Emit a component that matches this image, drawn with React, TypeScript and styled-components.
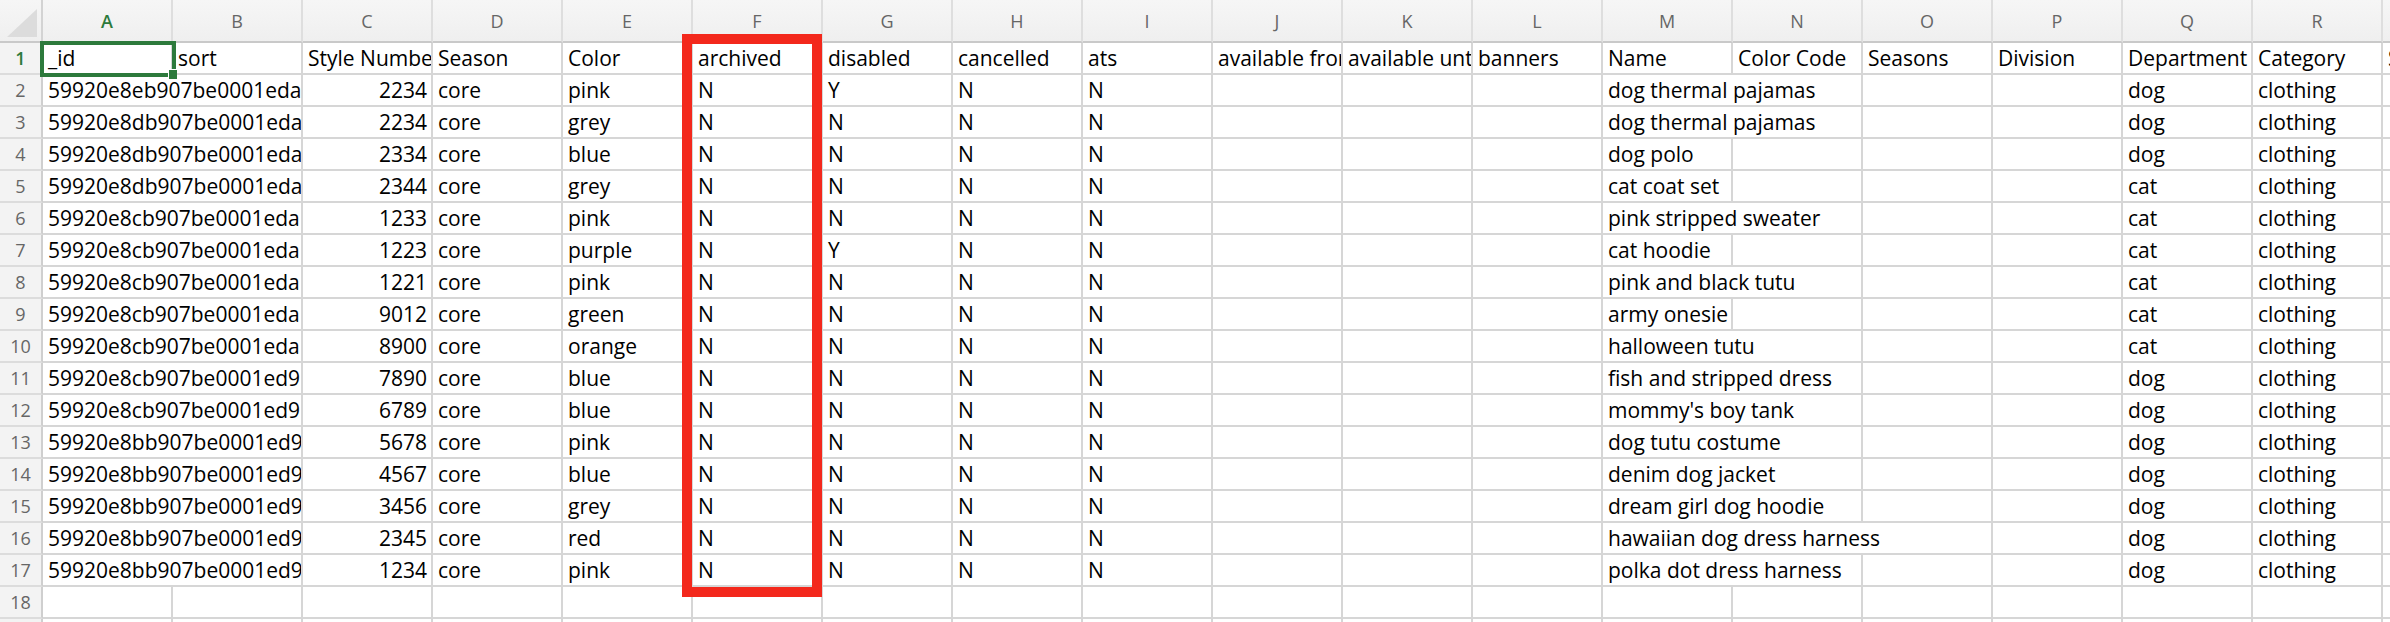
import React from 'react';
import styled, { createGlobalStyle } from 'styled-components';

const COL_W = 130;
const ROW_H = 32;
const HEAD_H = 43;
const ROWHEAD_W = 43;
const FONT = '"Open Sans", "Noto Sans", sans-serif';

const GlobalStyle = createGlobalStyle`
  html, body {
    margin: 0;
    padding: 0;
    background: #ffffff;
    overflow: hidden;
  }
  body {
    font-family: ${FONT};
  }
`;

const Sheet = styled.div`
  position: relative;
  display: grid;
  grid-template-columns: ${ROWHEAD_W}px repeat(19, ${COL_W}px);
  grid-template-rows: ${HEAD_H}px;
  grid-auto-rows: ${ROW_H}px;
  width: max-content;
`;

const Corner = styled.div`
  position: relative;
  background: linear-gradient(#f6f6f6, #efefef);
  border-right: 2px solid #d3d3d3;
  border-bottom: 2px solid #c9c9c9;

  svg {
    position: absolute;
    right: 4px;
    bottom: 4px;
  }
`;

const ColHead = styled.div<{ $active?: boolean }>`
  background: linear-gradient(#f6f6f6, #efefef);
  border-right: 2px solid #dedede;
  border-bottom: 2px solid #c9c9c9;
  display: flex;
  align-items: center;
  justify-content: center;
  font-size: 18px;
  color: ${(p) => (p.$active ? '#2d7a3c' : '#666666')};
  font-weight: ${(p) => (p.$active ? 600 : 400)};
`;

const RowHead = styled.div<{ $active?: boolean }>`
  background: #f3f3f3;
  border-right: 2px solid #cfcfcf;
  border-bottom: 2px solid #dcdcdc;
  display: flex;
  align-items: center;
  justify-content: center;
  font-size: 18px;
  color: ${(p) => (p.$active ? '#2d7a3c' : '#666666')};
  font-weight: ${(p) => (p.$active ? 600 : 400)};
`;

const Cell = styled.div<{ $right?: boolean }>`
  border-right: 2px solid #d6d6d6;
  border-bottom: 2px solid #d6d6d6;
  overflow: hidden;
  white-space: nowrap;
  padding: 0 4px 0 5px;
  font-size: 21px;
  line-height: ${ROW_H - 2}px;
  color: #000000;
  text-align: ${(p) => (p.$right ? 'right' : 'left')};
`;

const Selection = styled.div`
  position: absolute;
  left: 40px;
  top: 41px;
  width: 136px;
  height: 36px;
  box-sizing: border-box;
  border: 4px solid #2d7a3c;
  pointer-events: none;

  &::after {
    content: '';
    position: absolute;
    right: -5px;
    bottom: -6px;
    width: 8px;
    height: 9px;
    background: #2d7a3c;
    border-left: 1px solid #ffffff;
    border-top: 1px solid #ffffff;
  }
`;

const Highlight = styled.div`
  position: absolute;
  left: 682px;
  top: 34px;
  width: 140px;
  height: 563px;
  box-sizing: border-box;
  border: 10px solid #f3281c;
  pointer-events: none;
`;

const letters = 'ABCDEFGHIJKLMNOPQRS'.split('');

const header = [
  '_id', 'sort', 'Style Number', 'Season', 'Color', 'archived', 'disabled',
  'cancelled', 'ats', 'available from', 'available until', 'banners', 'Name',
  'Color Code', 'Seasons', 'Division', 'Department', 'Category', 'Size',
];

type Item = [string, string, string, string, string, string, string, string, string];

// id, style no, color, archived, disabled, cancelled, ats, name, department
const items: Item[] = [
  ['59920e8eb907be0001eda', '2234', 'pink', 'N', 'Y', 'N', 'N', 'dog thermal pajamas', 'dog'],
  ['59920e8db907be0001eda', '2234', 'grey', 'N', 'N', 'N', 'N', 'dog thermal pajamas', 'dog'],
  ['59920e8db907be0001eda', '2334', 'blue', 'N', 'N', 'N', 'N', 'dog polo', 'dog'],
  ['59920e8db907be0001eda', '2344', 'grey', 'N', 'N', 'N', 'N', 'cat coat set', 'cat'],
  ['59920e8cb907be0001eda', '1233', 'pink', 'N', 'N', 'N', 'N', 'pink stripped sweater', 'cat'],
  ['59920e8cb907be0001eda', '1223', 'purple', 'N', 'Y', 'N', 'N', 'cat hoodie', 'cat'],
  ['59920e8cb907be0001eda', '1221', 'pink', 'N', 'N', 'N', 'N', 'pink and black tutu', 'cat'],
  ['59920e8cb907be0001eda', '9012', 'green', 'N', 'N', 'N', 'N', 'army onesie', 'cat'],
  ['59920e8cb907be0001eda', '8900', 'orange', 'N', 'N', 'N', 'N', 'halloween tutu', 'cat'],
  ['59920e8cb907be0001ed9', '7890', 'blue', 'N', 'N', 'N', 'N', 'fish and stripped dress', 'dog'],
  ['59920e8cb907be0001ed9', '6789', 'blue', 'N', 'N', 'N', 'N', "mommy's boy tank", 'dog'],
  ['59920e8bb907be0001ed9', '5678', 'pink', 'N', 'N', 'N', 'N', 'dog tutu costume', 'dog'],
  ['59920e8bb907be0001ed9', '4567', 'blue', 'N', 'N', 'N', 'N', 'denim dog jacket', 'dog'],
  ['59920e8bb907be0001ed9', '3456', 'grey', 'N', 'N', 'N', 'N', 'dream girl dog hoodie', 'dog'],
  ['59920e8bb907be0001ed9', '2345', 'red', 'N', 'N', 'N', 'N', 'hawaiian dog dress harness', 'dog'],
  ['59920e8bb907be0001ed9', '1234', 'pink', 'N', 'N', 'N', 'N', 'polka dot dress harness', 'dog'],
];

const toRow = ([id, num, color, ar, dis, can, ats, name, dept]: Item): string[] => [
  id, '', num, 'core', color, ar, dis, can, ats, '', '', '', name, '', '', '', dept, 'clothing', '',
];

let ctx: CanvasRenderingContext2D | null = null;
const textWidth = (text: string) => {
  if (!ctx) {
    ctx = document.createElement('canvas').getContext('2d');
    if (ctx) ctx.font = `21px ${FONT}`;
  }
  return ctx ? ctx.measureText(text).width : text.length * 11;
};

const isNumber = (v: string) => /^\d+$/.test(v);

// text spills into empty neighbours, like Excel does
const renderRow = (values: string[], rowKey: number) => {
  const out: React.ReactNode[] = [];
  let i = 0;
  while (i < values.length) {
    const v = values[i];
    let span = 1;
    if (v && !isNumber(v)) {
      const need = textWidth(v) + 9;
      while (need > span * COL_W && i + span < values.length && values[i + span] === '') {
        span++;
      }
    }
    out.push(
      <Cell
        key={`${rowKey}-${i}`}
        $right={isNumber(v)}
        style={span > 1 ? { gridColumn: `span ${span}` } : undefined}
      >
        {v}
      </Cell>,
    );
    i += span;
  }
  return out;
};

const App: React.FC = () => {
  const rows = [header, ...items.map(toRow), Array(19).fill(''), Array(19).fill('')];

  return (
    <>
      <GlobalStyle />
      <Sheet>
        <Corner>
          <svg width="30" height="28" viewBox="0 0 30 28">
            <polygon points="0,28 30,28 30,0" fill="#dcdcdc" />
          </svg>
        </Corner>
        {letters.map((l, i) => (
          <ColHead key={l} $active={i === 0}>
            {l}
          </ColHead>
        ))}
        {rows.map((r, idx) => (
          <React.Fragment key={idx}>
            <RowHead $active={idx === 0}>{idx + 1}</RowHead>
            {renderRow(r, idx)}
          </React.Fragment>
        ))}
        <Selection />
        <Highlight />
      </Sheet>
    </>
  );
};

export default App;
